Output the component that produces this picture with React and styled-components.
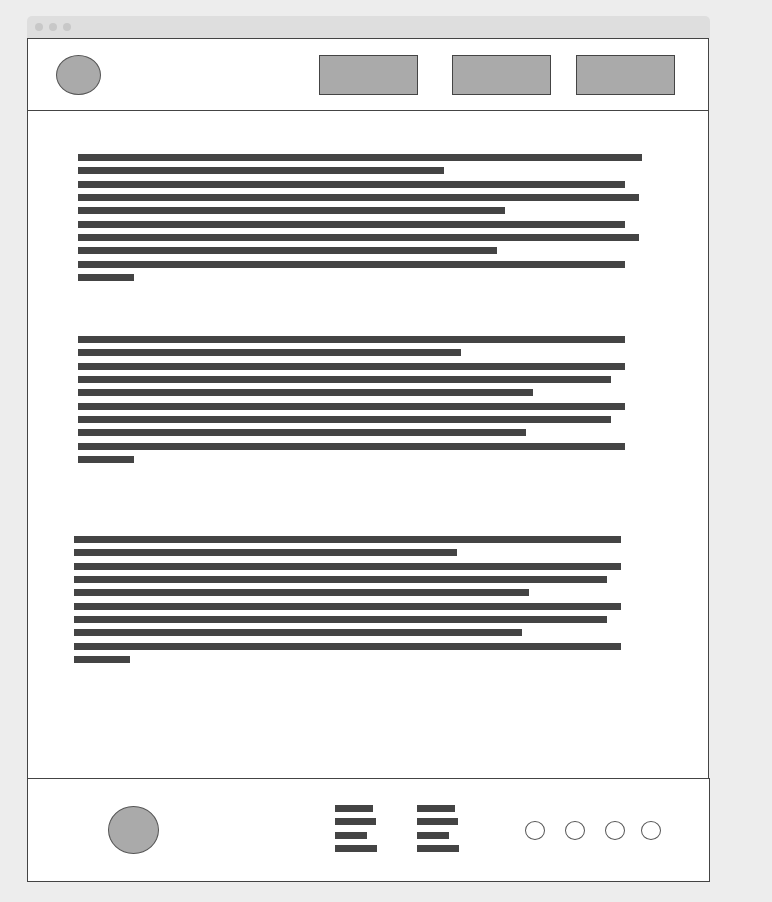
import styled, { createGlobalStyle } from "styled-components";

const GlobalStyle = createGlobalStyle`
  body {
    margin: 0;
    background: #ededed;
    font-family: "Liberation Sans", Arial, sans-serif;
  }
`;

const Page = styled.div`
  padding: 16px 0 20px 27px;
`;

const Window = styled.div`
  width: 683px;
  display: flex;
  flex-direction: column;
`;

const TitleBar = styled.div`
  height: 22px;
  background: #dedede;
  border-radius: 5px 5px 0 0;
  display: flex;
  align-items: center;
  gap: 6px;
  padding-left: 8px;
  box-sizing: border-box;
`;

const Dot = styled.span`
  width: 8px;
  height: 8px;
  border-radius: 50%;
  background: #c8c8c8;
`;

const Frame = styled.div`
  width: 682px;
  box-sizing: border-box;
  border: 1px solid #444;
  border-bottom: none;
  background: #fff;
`;

const Header = styled.header`
  height: 72px;
  box-sizing: border-box;
  border-bottom: 1px solid #444;
  display: flex;
  align-items: center;
  padding: 0 33px 0 28px;
`;

const Blob = styled.div`
  width: ${(p) => p.$w}px;
  height: ${(p) => p.$h}px;
  box-sizing: border-box;
  border-radius: 50%;
  border: 1px solid #555;
  background: #aaa;
  flex-shrink: 0;
`;

const NavButton = styled.div`
  width: 99px;
  height: 40px;
  box-sizing: border-box;
  border: 1px solid #444;
  background: #aaa;
  margin-left: ${(p) => (p.$first ? "auto" : `${p.$gap}px`)};
`;

const Content = styled.main`
  height: 667px;
  box-sizing: border-box;
  padding-top: 43px;
  display: flex;
  flex-direction: column;
`;

const Paragraph = styled.div`
  display: flex;
  flex-direction: column;
  align-items: flex-start;
  gap: 6.333px;
  margin-top: ${(p) => p.$top}px;
  padding-left: ${(p) => p.$indent}px;
`;

const Bar = styled.div`
  height: 7px;
  background: #444;
`;

const Footer = styled.footer`
  width: 683px;
  height: 104px;
  box-sizing: border-box;
  border: 1px solid #444;
  background: #fff;
  display: flex;
  align-items: center;
  padding-left: 80px;
`;

const LinkColumn = styled.div`
  display: flex;
  flex-direction: column;
  align-items: flex-start;
  gap: 6.333px;
  margin-left: ${(p) => p.$left}px;
  margin-bottom: 3px;
`;

const SocialRow = styled.div`
  display: flex;
  align-items: center;
  margin-left: 66px;
`;

const Social = styled.span`
  width: 20px;
  height: 19px;
  box-sizing: border-box;
  border: 1px solid #555;
  border-radius: 50%;
  margin-left: ${(p) => p.$gap}px;
`;

const paraA = [564, 366, 547, 561, 427, 547, 561, 419, 547, 56];
const paraB = [547, 383, 547, 533, 455, 547, 533, 448, 547, 56];
const paragraphs = [
  { top: 0, indent: 50, lines: paraA },
  { top: 55, indent: 50, lines: paraB },
  { top: 73, indent: 46, lines: paraB },
];
const linkWidths = [38, 41, 32, 42];

export default function App() {
  return (
    <>
      <GlobalStyle />
      <Page>
        <Window>
          <TitleBar>
            <Dot />
            <Dot />
            <Dot />
          </TitleBar>
          <Frame>
            <Header>
              <Blob $w={45} $h={40} />
              <NavButton $first />
              <NavButton $gap={34} />
              <NavButton $gap={25} />
            </Header>
            <Content>
              {paragraphs.map((p, i) => (
                <Paragraph key={i} $top={p.top} $indent={p.indent}>
                  {p.lines.map((w, j) => (
                    <Bar key={j} style={{ width: w }} />
                  ))}
                </Paragraph>
              ))}
            </Content>
          </Frame>
          <Footer>
            <Blob $w={51} $h={48} />
            <LinkColumn $left={176}>
              {linkWidths.map((w, j) => (
                <Bar key={j} style={{ width: w }} />
              ))}
            </LinkColumn>
            <LinkColumn $left={40}>
              {linkWidths.map((w, j) => (
                <Bar key={j} style={{ width: w }} />
              ))}
            </LinkColumn>
            <SocialRow>
              <Social $gap={0} />
              <Social $gap={20} />
              <Social $gap={20} />
              <Social $gap={16} />
            </SocialRow>
          </Footer>
        </Window>
      </Page>
    </>
  );
}
